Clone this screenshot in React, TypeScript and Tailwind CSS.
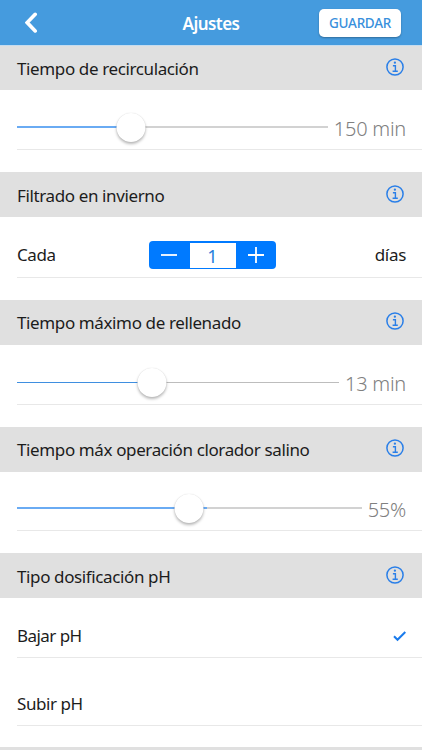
import React from 'react';
import clsx from 'clsx';

interface SectionTitleProps {
    title: string;
    className?: string;
}

const InfoIcon = () => (
    <svg width="18" height="18" viewBox="0 0 18 18" fill="none" stroke="#2a7fe8">
        <circle cx="9" cy="9" r="8.1" strokeWidth="1.5" />
        <circle cx="8.9" cy="4.7" r="1.15" fill="#2a7fe8" stroke="none" />
        <path d="M6.9 7.8h2.5v5.3M6.6 13.2h5.2" strokeWidth="1.4" />
    </svg>
);

const SectionTitle = ({ title, className }: SectionTitleProps) => (
    <div className={clsx('flex items-center justify-between bg-[#e0e0e0] pl-[17px] pr-[18px]', className)}>
        <h2 className="pt-0.5 text-[17px] leading-6 tracking-[-0.38px] whitespace-nowrap">{title}</h2>
        <button type="button" aria-label="Información" className="pb-0.5">
            <InfoIcon />
        </button>
    </div>
);

interface SliderRowProps {
    percent: number;
    fill: number;
    value: string;
    trackWidth: string;
    lineClass: string;
    fillClass: string;
    className?: string;
}

const SliderRow = ({ percent, fill, value, trackWidth, lineClass, fillClass, className }: SliderRowProps) => (
    <div className={clsx('ml-[17px] flex items-center justify-between border-b border-[#e8e8e8] pt-[18px] pr-4', className)}>
        <div className={clsx('relative h-8 shrink-0 pt-[13px]', trackWidth)}>
            <div className={lineClass}>
                <div className={clsx('h-full', fillClass)} style={{ width: `${fill}%` }} />
            </div>
            <div
                className="absolute top-0 size-[29px] -translate-x-1/2 rounded-full bg-white shadow-[0_2px_3px_rgba(0,0,0,0.28),0_0_1px_rgba(0,0,0,0.15)]"
                style={{ left: `${percent}%` }}
            />
        </div>
        <span className="text-[20px] leading-6 font-light tracking-[-0.25px] whitespace-nowrap text-[#808080]">{value}</span>
    </div>
);

const App = () => {
    return (
        <div className="h-[750px] w-[422px] overflow-hidden bg-white font-['Noto_Sans',sans-serif] text-[#1c1c1c]">
            <header className="grid h-[46px] grid-cols-[82px_1fr_82px] items-center border-b border-[#c5dcef] bg-[#459bde] pr-[21px] pl-[25px]">
                <button type="button" aria-label="Volver" className="justify-self-start">
                    <svg width="13" height="22" viewBox="0 0 13 22" fill="none" stroke="#fff" strokeWidth="3.6" strokeLinecap="round">
                        <path d="M10.2 2.3L2.2 10.6l8 8.3" />
                    </svg>
                </button>
                <h1 className="pt-0.5 pr-1 text-center text-[17px] font-semibold tracking-[-0.55px] text-white">Ajustes</h1>
                <button type="button" className="h-7 rounded-[5px] bg-white pt-px text-[13.5px] font-medium tracking-[-0.3px] text-[#3990dc] shadow-[0_1px_2px_rgba(0,0,0,0.3)]">
                    GUARDAR
                </button>
            </header>

            <SectionTitle title="Tiempo de recirculación" className="h-11" />
            <SliderRow percent={36.6} fill={36.6} value="150 min" trackWidth="w-[311px]" lineClass="h-0.5 bg-[#d2d2d2]" fillClass="bg-[#6aabf3]" className="h-[60px]" />

            <SectionTitle title="Filtrado en invierno" className="mt-[22px] h-[45px]" />
            <div className="ml-[17px] flex h-[61px] items-center justify-between border-b border-[#e8e8e8] pt-4 pr-4 text-[17px]">
                <span className="w-[82px] tracking-[-0.38px]">Cada</span>
                <div className="flex h-7 w-[127px] items-center rounded-[4px] bg-[#007aff] text-white">
                    <button type="button" aria-label="Menos" className="flex flex-1 justify-center">
                        <svg width="16" height="16" viewBox="0 0 16 16" stroke="currentColor" strokeWidth="1.8">
                            <path d="M0 8h16" />
                        </svg>
                    </button>
                    <span className="flex h-[25px] w-[46px] items-center justify-center bg-white pt-0.5 text-[18px] text-[#2980dc]">1</span>
                    <button type="button" aria-label="Más" className="flex flex-1 justify-center">
                        <svg width="16" height="16" viewBox="0 0 16 16" stroke="currentColor" strokeWidth="1.8">
                            <path d="M0 8h16M8 0v16" />
                        </svg>
                    </button>
                </div>
                <span className="w-20 text-right tracking-[-0.3px]">días</span>
            </div>

            <SectionTitle title="Tiempo máximo de rellenado" className="mt-[22px] h-[45px] pb-px" />
            <SliderRow percent={42} fill={42} value="13 min" trackWidth="w-[322px]" lineClass="mt-px h-px bg-[#bdbdbd]" fillClass="bg-[#3f8fe0]" className="h-[60px]" />

            <SectionTitle title="Tiempo máx operación clorador salino" className="mt-[22px] h-[45px] pb-px" />
            <SliderRow percent={49.8} fill={55} value="55%" trackWidth="w-[345px]" lineClass="h-0.5 bg-[#d2d2d2]" fillClass="bg-[#6aabf3]" className="h-[59px]" />

            <SectionTitle title="Tipo dosificación pH" className="mt-[22px] h-[45px]" />
            <div className="ml-[17px] flex h-[60px] items-center justify-between border-b border-[#e8e8e8] pt-[17px] pr-4 text-[17px]">
                <span className="tracking-[-0.55px]">Bajar pH</span>
                <svg width="13" height="11" viewBox="0 0 13 11" fill="none" stroke="#1a7bec" strokeWidth="2">
                    <path d="M1 5.3l3.5 3.5L12.3 1" />
                </svg>
            </div>
            <div className="ml-[17px] flex h-[68px] items-center border-b border-[#e8e8e8] pt-6 text-[17px]">
                <span className="tracking-[-0.45px]">Subir pH</span>
            </div>
            <div className="mt-[21px] h-3 bg-[#e0e0e0]" />
        </div>
    );
};

export default App;
